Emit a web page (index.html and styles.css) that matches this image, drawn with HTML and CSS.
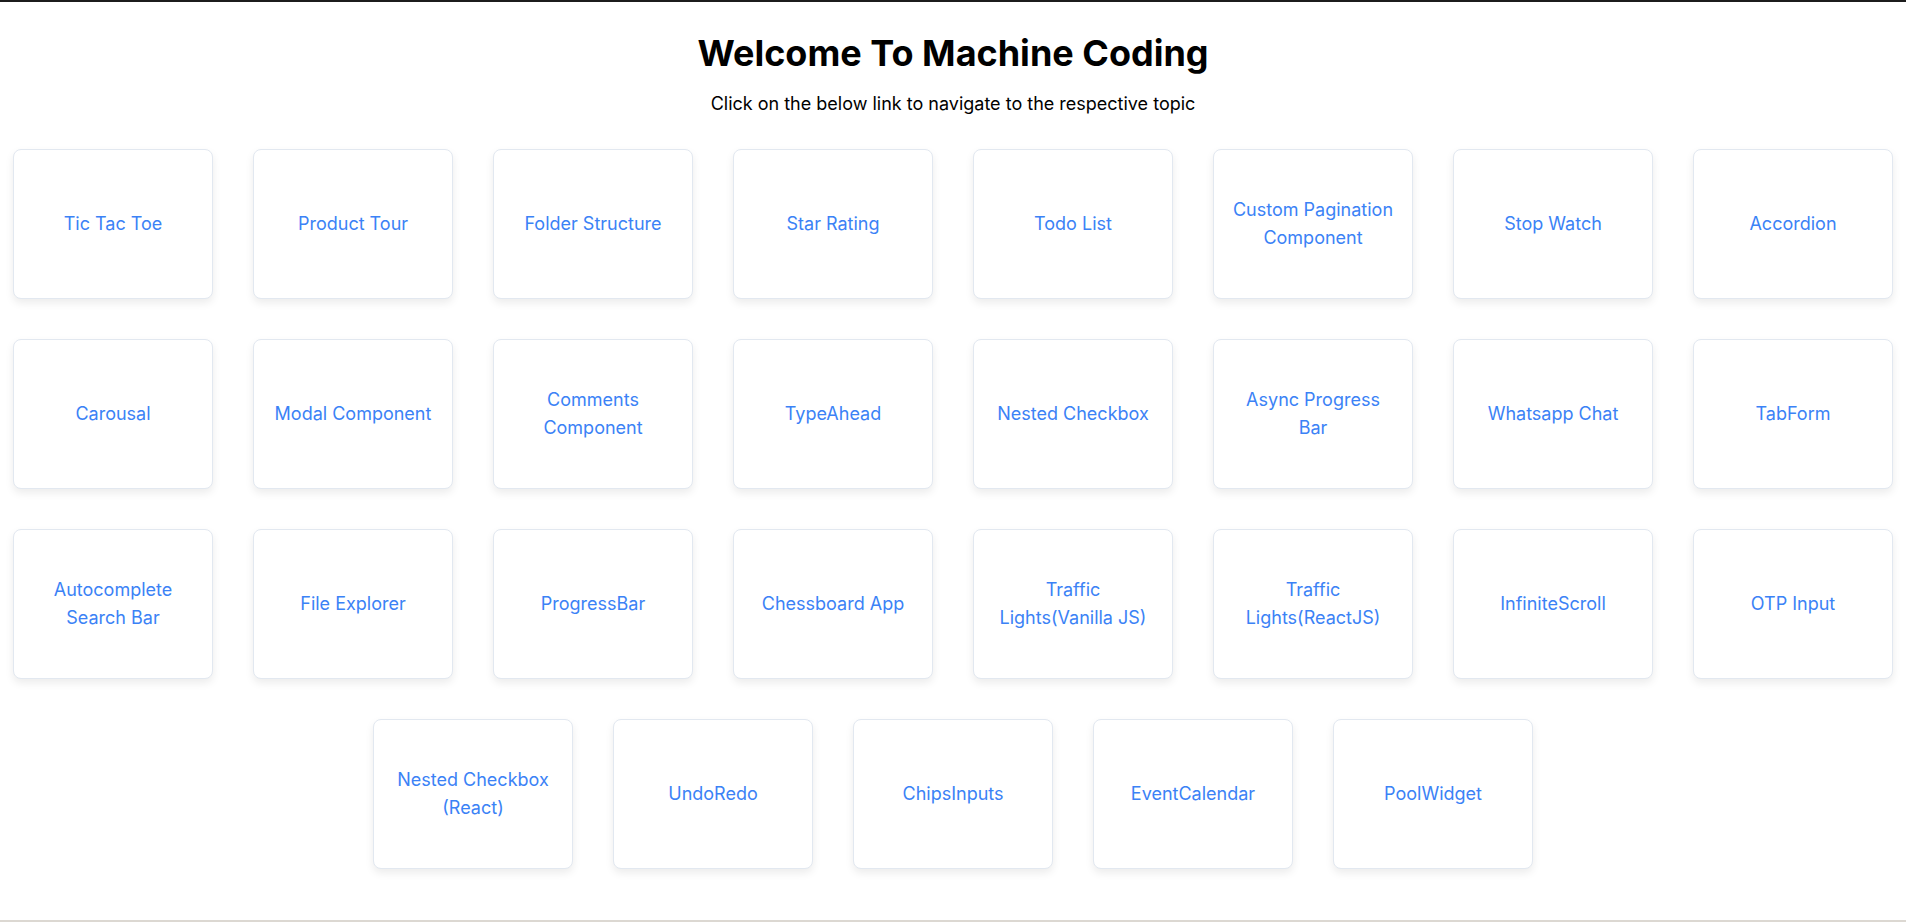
FILE: index.html
```html
<!DOCTYPE html>
<html lang="en">
<head>
<meta charset="utf-8">
<title>Machine Coding</title>
<link rel="stylesheet" href="styles.css">
</head>
<body>
<div class="page">
  <header class="header">
    <h1 class="title">Welcome To Machine Coding</h1>
    <p class="subtitle">Click on the below link to navigate to the respective topic</p>
  </header>
  <main class="grid">
    <a class="card" href="#">Tic Tac Toe</a>
    <a class="card" href="#">Product Tour</a>
    <a class="card" href="#">Folder Structure</a>
    <a class="card" href="#">Star Rating</a>
    <a class="card" href="#">Todo List</a>
    <a class="card" href="#">Custom Pagination Component</a>
    <a class="card" href="#">Stop Watch</a>
    <a class="card" href="#">Accordion</a>
    <a class="card" href="#">Carousal</a>
    <a class="card" href="#">Modal Component</a>
    <a class="card" href="#">Comments Component</a>
    <a class="card" href="#">TypeAhead</a>
    <a class="card" href="#">Nested Checkbox</a>
    <a class="card" href="#">Async Progress Bar</a>
    <a class="card" href="#">Whatsapp Chat</a>
    <a class="card" href="#">TabForm</a>
    <a class="card" href="#">Autocomplete Search Bar</a>
    <a class="card" href="#">File Explorer</a>
    <a class="card" href="#">ProgressBar</a>
    <a class="card" href="#">Chessboard App</a>
    <a class="card" href="#">Traffic Lights(Vanilla JS)</a>
    <a class="card" href="#">Traffic Lights(ReactJS)</a>
    <a class="card" href="#">InfiniteScroll</a>
    <a class="card" href="#">OTP Input</a>
    <a class="card" href="#">Nested Checkbox (React)</a>
    <a class="card" href="#">UndoRedo</a>
    <a class="card" href="#">ChipsInputs</a>
    <a class="card" href="#">EventCalendar</a>
    <a class="card" href="#">PoolWidget</a>
  </main>
</div>
</body>
</html>
```
FILE: styles.css
```css
* { box-sizing: border-box; }
html, body { margin: 0; padding: 0; background: #ffffff; }
body {
  font-family: Inter, "Noto Sans", Arial, sans-serif;
  color: #000;
}
.page {
  height: 922px;
  border-top: 2px solid #1c1c1c;
  border-bottom: 2px solid #dcd8d2;
  overflow: hidden;
}
.header {
  text-align: center;
  padding-top: 28px;
}
.title {
  margin: 0;
  font-size: 36px;
  font-weight: 700;
  line-height: 46px;
}
.subtitle {
  margin: 16px 0 0;
  font-size: 18px;
  line-height: 24px;
}
.grid {
  display: flex;
  flex-wrap: wrap;
  justify-content: center;
  gap: 40px;
  margin-top: 33px;
}
.card {
  width: 200px;
  height: 150px;
  padding: 0 16px;
  display: flex;
  align-items: center;
  justify-content: center;
  text-align: center;
  border: 1px solid #e2e8f0;
  border-radius: 8px;
  background: #fff;
  box-shadow: 0 4px 8px rgba(0, 0, 0, 0.08);
  color: #3b82f6;
  font-size: 18px;
  line-height: 28px;
  text-decoration: none;
}
```
